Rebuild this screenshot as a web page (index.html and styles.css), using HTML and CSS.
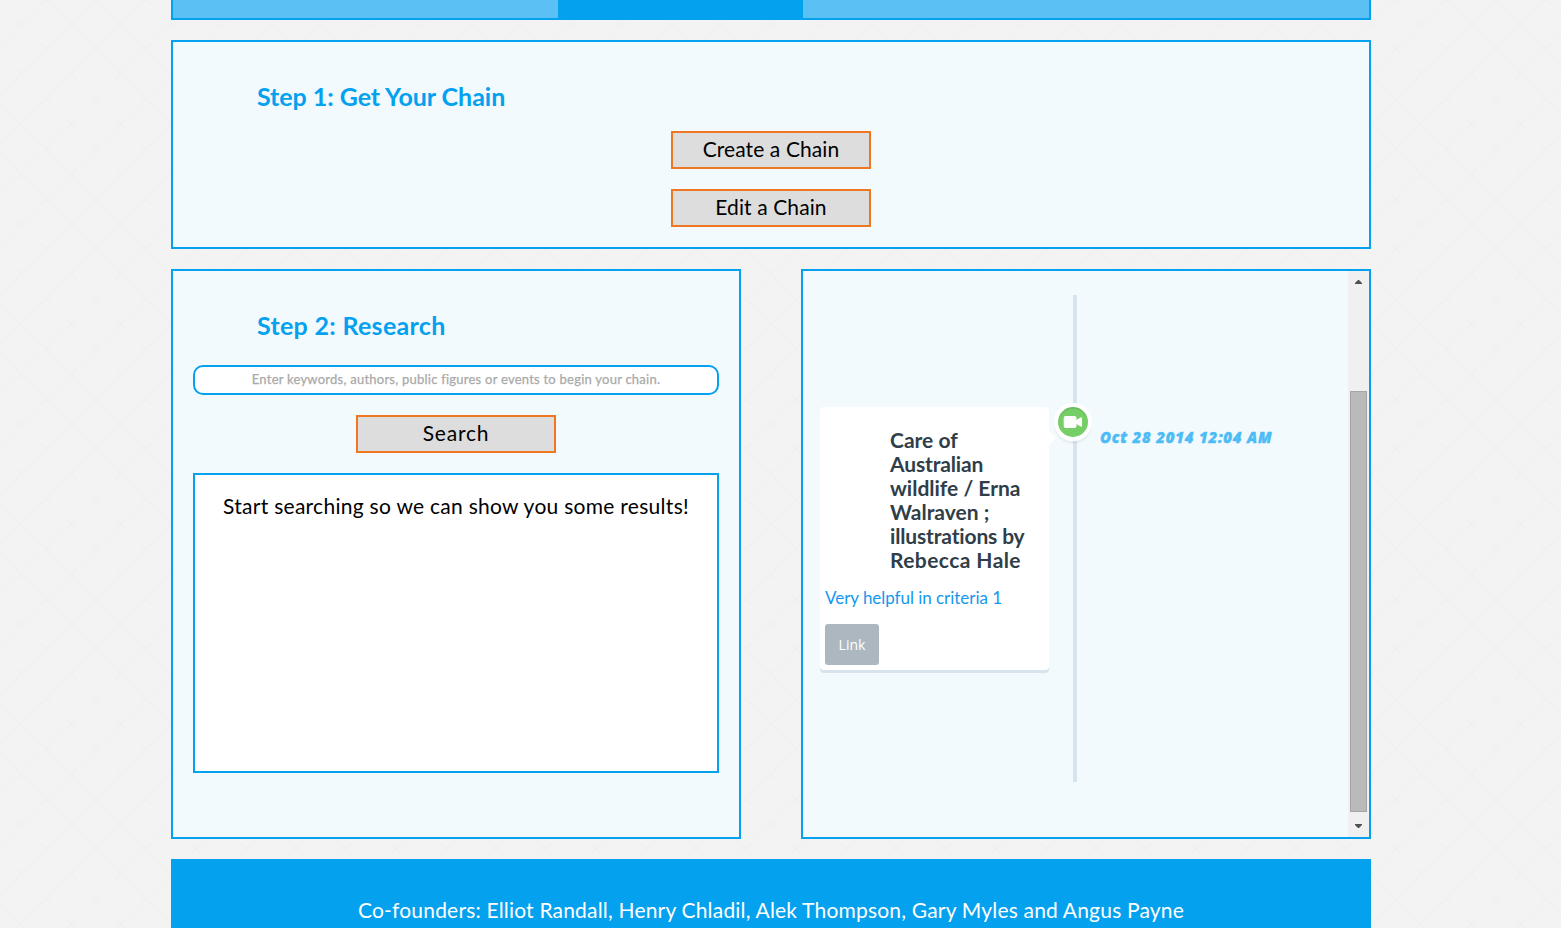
FILE: index.html
```html
<!DOCTYPE html>
<html lang="en">
<head>
<meta charset="utf-8">
<title>Chain</title>
<link rel="stylesheet" href="styles.css">
</head>
<body>
<div class="container">
  <nav class="nav"><div class="nav-current"></div></nav>
  <section class="panel step-one">
    <h2 class="heading"><span class="heading-one">Step 1: Get Your Chain</span></h2>
    <button class="action create">Create a Chain</button>
    <button class="action edit">Edit a Chain</button>
  </section>
  <div class="columns">
    <section class="panel research">
      <h2 class="heading"><span class="heading-two">Step 2: Research</span></h2>
      <div class="keywords"><span>Enter keywords, authors, public figures or events to begin your chain.</span></div>
      <button class="action search">Search</button>
      <div class="results"><span>Start searching so we can show you some results!</span></div>
    </section>
    <section class="panel chain">
      <div class="timeline">
        <article class="card">
          <h3 class="card-title">Care of<br><span class="snug">Australian</span><br>wildlife / Erna<br>Walraven ;<br><span class="snug">illustrations by</span><br><span class="wide">Rebecca Hale</span></h3>
          <p class="card-note">Very helpful in criteria 1</p>
          <a class="card-link">Link</a>
        </article>
        <div class="rail">
          <div class="marker">
            <svg width="20" height="14" viewBox="0 0 20 14"><path fill="#fff" d="M2.500 1H11.500Q13.500 1 13.500 3V5L17.500 2.500H19V11.500H17.500L13.500 9V11Q13.500 13 11.500 13H2.500Q.7 13 .7 11V3Q.7 1 2.500 1Z"/></svg>
          </div>
        </div>
        <time class="date">Oct 28 2014 12:04 AM</time>
      </div>
      <div class="scrollbar">
        <svg class="arrow" width="7" height="4" viewBox="0 0 7 4"><path fill="#505050" d="M0 4V3L3 0H4L7 3V4Z"/></svg>
        <div class="thumb"></div>
        <svg class="arrow" width="7" height="4" viewBox="0 0 7 4"><path fill="#505050" d="M0 0V1L3 4H4L7 1V0Z"/></svg>
      </div>
    </section>
  </div>
  <footer class="footer"><span>Co-founders: Elliot Randall, Henry Chladil, Alek Thompson, Gary Myles and Angus Payne</span></footer>
</div>
</body>
</html>
```
FILE: styles.css
```css
* { box-sizing: border-box; }
html { height: 100%; overflow: hidden; }
body {
  margin: 0;
  height: 928px;
  overflow: hidden;
  font-family: Lato, sans-serif;
  color: #000;
  background-color: #f3f3f3;
  background-image:
    linear-gradient(to top right, transparent 48.6%, #f0f0f0 50%, transparent 51.4%),
    linear-gradient(to bottom right, transparent 48.6%, #f0f0f0 50%, transparent 51.4%);
  background-size: 50px 50px;
  background-position: 21px 24px;
}
.container { width: 1200px; margin-left: 171px; display: flex; flex-direction: column; gap: 20px; white-space: nowrap; font-variant-ligatures: none; }
.nav { height: 20px; background: #5bc0f3; border: 2px solid #04a1ef; border-top: 0; padding-left: 385px; }
.nav-current { width: 245px; height: 18px; background: #04a1ef; }
.panel { background: #f2fafe; border: 2px solid #04a1ef; }
.step-one { height: 209px; padding-top: 40px; display: flex; flex-direction: column; align-items: center; }
.heading { align-self: flex-start; margin: 0 0 20px 84px; font-size: 25px; line-height: 29px; font-weight: 700; color: #04a1ef; }
.heading-one { letter-spacing: -.04px; }
.heading-two { letter-spacing: .3px; }
.action { width: 200px; height: 38px; margin: 0 0 20px; padding: 0 0 2px; border: 2px solid #ef7622; background: #ddd; font: 400 21px/32px Lato, sans-serif; letter-spacing: .1px; color: #000; }
.search { letter-spacing: .8px; }
.columns { display: flex; justify-content: space-between; height: 570px; }
.research { width: 570px; padding: 40px 20px 0; display: flex; flex-direction: column; align-items: center; }
.research .heading { margin: 0 0 25px 64px; }
.keywords { width: 526px; height: 30px; margin-bottom: 20px; border: 2px solid #04a1ef; border-radius: 10px; background: #fff; color: #a9a9a9; text-align: center; font-size: 13px; line-height: 25px; letter-spacing: .24px; -webkit-text-stroke: .25px #a9a9a9; }
.results { width: 526px; height: 300px; padding-top: 19px; border: 2px solid #04a1ef; background: #fff; text-align: center; font-size: 21px; line-height: 24px; letter-spacing: .28px; }
.chain { width: 570px; display: flex; justify-content: space-between; }
.timeline { display: flex; padding: 24px 0 0 17px; }
.card { position: relative; width: 229px; height: 263px; margin-top: 112px; padding: 21px 5px 0; background: #fff; border-radius: 4px; box-shadow: 0 3px 0 #d7e4ed; }
.card::after { content: ""; position: absolute; left: 229px; top: 24px; border: 7px solid transparent; border-left-color: #fff; border-right: 0; }
.card-title { margin: 0 0 16px 65px; font-size: 21px; line-height: 24px; font-weight: 700; letter-spacing: 0; color: #303e49; }
.snug { letter-spacing: -.15px; }
.wide { letter-spacing: .42px; }
.card-note { margin: 0 0 16px; font-size: 17px; line-height: 20px; letter-spacing: -.04px; color: #1698ef; }
.card-link { display: block; width: 54px; height: 41px; border-radius: 3px; background: #acb7c0; color: #fff; text-align: center; font: 14px/41px "Open Sans", sans-serif; }
.rail { width: 4px; height: 487px; margin-left: 24px; background: #d7e4ed; }
.marker { position: relative; left: -19px; top: 108px; width: 38px; height: 38px; border: 4px solid #fff; border-radius: 50%; background: #75ce66; box-shadow: inset 0 2px 0 rgba(0,0,0,.08), 0 3px 0 rgba(0,0,0,.04); display: flex; align-items: center; justify-content: center; }
.date { margin: 132px 0 0 23px; font: italic 800 15px/20px "Open Sans", sans-serif; letter-spacing: .8px; -webkit-text-stroke: .4px #4dbcf5; color: #4dbcf5; }
.scrollbar { width: 21px; padding: 9px 2px 9px; background: #f0f0f0; display: flex; flex-direction: column; align-items: center; }
.arrow { flex: none; margin-left: -1px; }
.thumb { width: 17px; height: 421px; margin: 107px 0 12px; background: #bababa; border: 1px solid #a5a5a5; }
.footer { height: 100px; padding-top: 39px; background: #04a1ef; color: #fff; text-align: center; font-size: 21px; line-height: 24px; letter-spacing: .19px; }
```
